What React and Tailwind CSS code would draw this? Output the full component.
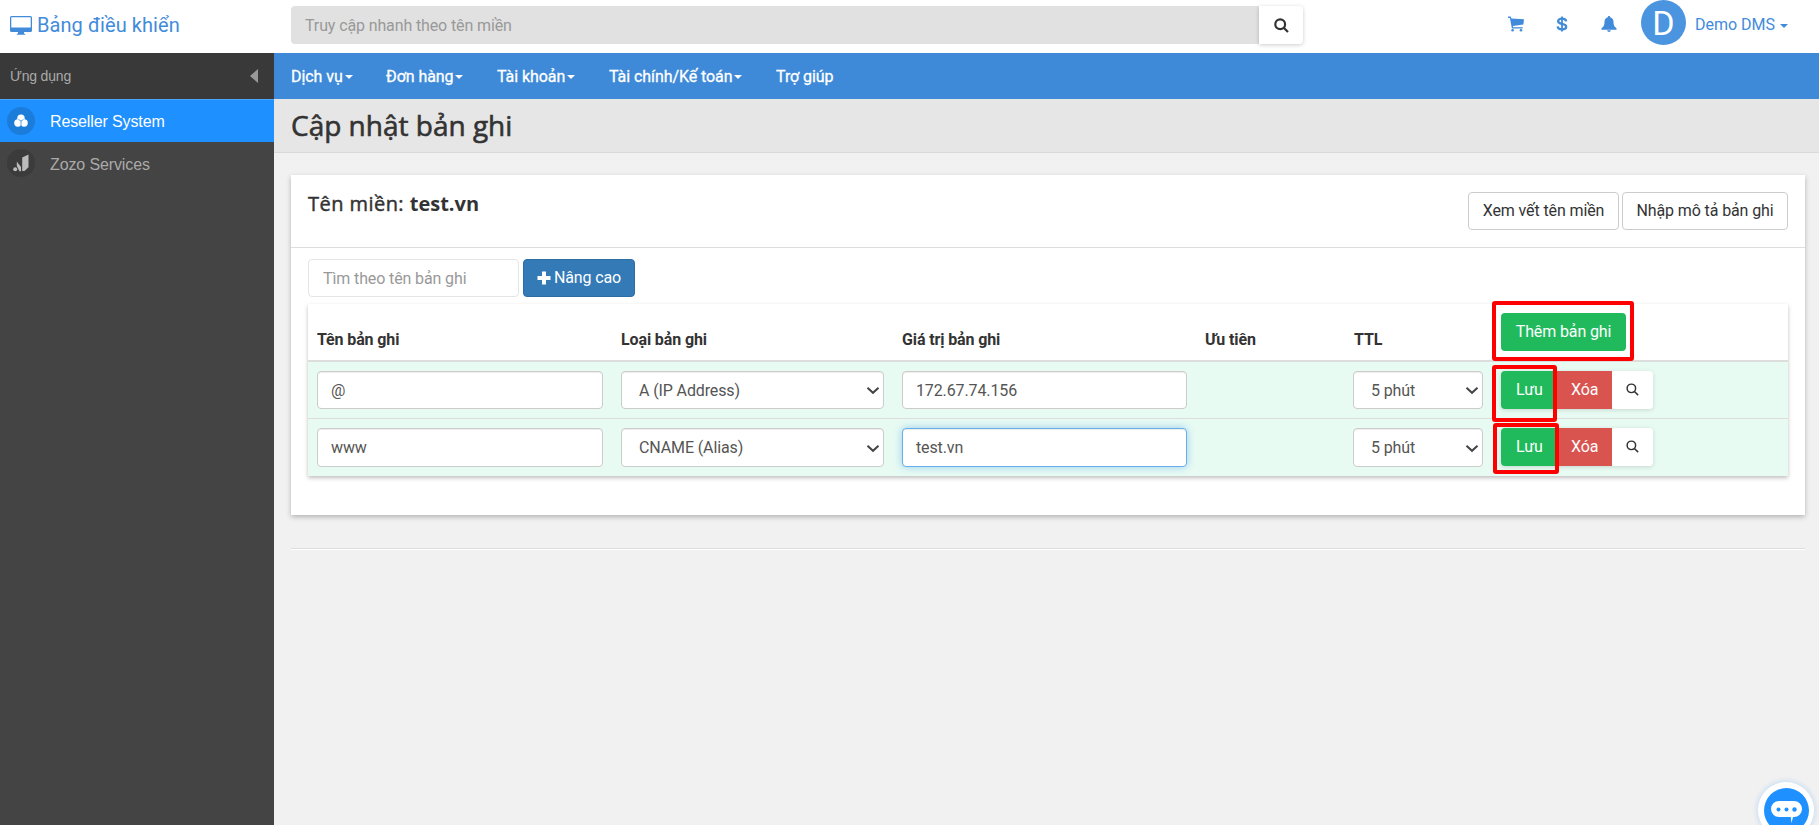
import React from 'react';

const menus = [
  { label: 'Dịch vụ', caret: true, width: 'w-[95px]' },
  { label: 'Đơn hàng', caret: true, width: 'w-[111px]' },
  { label: 'Tài khoản', caret: true, width: 'w-[112px]' },
  { label: 'Tài chính/Kế toán', caret: true, width: 'w-[167px]' },
  { label: 'Trợ giúp', caret: false, width: 'w-[90px]' },
];

const records = [
  { name: '@', type: 'A (IP Address)', value: '172.67.74.156', ttl: '5 phút', focused: false, mark: '-left-[9px] -top-[6px] w-[65px] h-[57px]' },
  { name: 'www', type: 'CNAME (Alias)', value: 'test.vn', ttl: '5 phút', focused: true, mark: '-left-[8px] -top-[5px] w-[66px] h-[51px]' },
];

const cols = 'grid grid-cols-[304px_281px_303px_149px_147px_1fr]';
const field = 'w-full rounded border px-[13px] text-[#555] bg-white';

const Caret = ({ className = 'ml-[2px]' }) => (
  <span className={`inline-block w-0 h-0 border-x-4 border-x-transparent border-t-4 border-t-current align-middle ${className}`} />
);

const DesktopIcon = () => (
  <svg width="22" height="19" viewBox="0 0 22 19" fill="currentColor">
    <path fillRule="evenodd" d="M1.5 0h19A1.5 1.5 0 0 1 22 1.5v13a1.5 1.5 0 0 1-1.5 1.5H14v1.4l1.2.6v.8H6.8V18l1.2-.6V16H1.5A1.5 1.5 0 0 1 0 14.5v-13A1.5 1.5 0 0 1 1.5 0zM1.300 1.300v10.200h19.400V1.300z" />
  </svg>
);

const CartIcon = () => (
  <svg className="mr-[31px]" width="16" height="16" viewBox="0 0 16 16" fill="currentColor">
    <path d="M0 .6h2.7l.7 1.9L16 3.200l-.6 5.400-10.600 1.500.3 1.100h9.600v1.300H3.900L1.900 1.900H0z" />
    <circle cx="4.6" cy="14.3" r="1.3" />
    <circle cx="13" cy="14.3" r="1.3" />
  </svg>
);

const DollarIcon = () => (
  <svg className="mr-[32px]" width="14" height="16" viewBox="0 0 14 16" fill="none" stroke="currentColor">
    <path strokeWidth="2.3" d="M11.2 5.4C11 3.6 9.5 2.7 7 2.7S3.1 3.6 3.1 5.2C3.1 7 4.7 7.4 7 7.9s4.200 1 4.200 2.900c0 1.700-1.700 2.600-4.200 2.600-2.700 0-4.200-1-4.300-3" />
    <path strokeWidth="1.8" d="M7 .4v15.2" />
  </svg>
);

const BellIcon = () => (
  <svg className="mr-[24px]" width="16" height="16" viewBox="0 0 16 16" fill="currentColor">
    <path d="M8 0c.8 0 1.200.5 1.200 1.200 2.300.6 3.300 2.300 3.300 4.800 0 3.200.7 4.800 3 6.200v1.500H.5v-1.500c2.300-1.400 3-3 3-6.200 0-2.500 1-4.200 3.300-4.800C6.800.5 7.200 0 8 0z" />
    <path d="M6.2 14.2h3.600a1.800 1.800 0 0 1-3.600 0z" />
  </svg>
);

const SearchIcon = ({ size, stroke }) => (
  <svg width={size} height={size} viewBox="0 0 15 15" fill="none" stroke="currentColor" strokeWidth={stroke}>
    <circle cx="6.2" cy="6.2" r="4.9" />
    <path d="M9.7 9.7L14 14" />
  </svg>
);

const PlusIcon = () => (
  <svg className="mr-[3px]" width="14" height="14" viewBox="0 0 14 14" fill="currentColor">
    <path d="M5 .5h4V5h4.5v4H9v4.5H5V9H.5V5H5z" />
  </svg>
);

const TextField = ({ value, focused, height }) => (
  <div
    className={`${field} ${height} leading-[37px] ${
      focused
        ? 'border-[#66afe9] shadow-[inset_0_1px_1px_rgba(0,0,0,0.075),0_0_8px_rgba(102,175,233,0.6)]'
        : 'border-[#ccc] shadow-[inset_0_1px_1px_rgba(0,0,0,0.075)]'
    }`}
  >
    {value}
  </div>
);

const SelectField = ({ value, height }) => (
  <div className={`${field} ${height} flex items-center justify-between border-[#ccc] pl-[17px] pr-[3px] shadow-[inset_0_1px_1px_rgba(0,0,0,0.075)]`}>
    <span className="leading-[37px]">{value}</span>
    <svg width="14" height="10" viewBox="0 0 14 10" fill="none" stroke="#444" strokeWidth="2">
      <path d="M1.5 2.8 L7 7.8 L12.5 2.8" />
    </svg>
  </div>
);

const Mark = ({ className }) => (
  <span className={`absolute rounded-[3px] border-4 border-[#fe0000] ${className}`} />
);

const Header = () => (
  <header className="flex h-[53px] bg-white text-[#428bda]">
    <div className="flex w-[274px] items-center pb-[3px] pl-[10px]">
      <DesktopIcon />
      <span className="ml-[5px] text-[20px] tracking-[0.08px]">Bảng điều khiển</span>
    </div>
    <div className="flex pl-[17px] pt-[6px]">
      <div className="h-[38px] w-[968px] rounded-l bg-[#e1e1e1] pl-[14px] leading-[39px] text-[#999]">
        Truy cập nhanh theo tên miền
      </div>
      <div className="flex h-[38px] w-[44px] items-center justify-center rounded-r bg-white text-[#333] shadow-[0_1px_4px_rgba(0,0,0,0.2)]">
        <SearchIcon size="15" stroke="2.2" />
      </div>
    </div>
    <div className="ml-auto flex h-[48px] items-center pr-[31px]">
      <CartIcon />
      <DollarIcon />
      <BellIcon />
      <div className="mb-[3px] flex h-[45px] w-[45px] items-center justify-center rounded-full bg-[#4a94e0] text-[34px] text-white">
        D
      </div>
      <span className="ml-[9px] mt-[2px] tracking-normal">
        Demo DMS <Caret className="ml-[1px]" />
      </span>
    </div>
  </header>
);

const Sidebar = () => (
  <aside className="flex w-[274px] flex-col bg-[#444] font-['Liberation_Sans',sans-serif] text-[#aaa]">
    <div className="flex h-[46px] items-center justify-between bg-[#393939] pl-[10px] pr-[16px]">
      <span className="text-[14px] tracking-[-0.2px]">Ứng dụng</span>
      <svg width="8" height="14" viewBox="0 0 8 14" fill="#999">
        <path d="M8 0v14L0 7z" />
      </svg>
    </div>
    <div className="flex h-[43px] items-center border-t border-[#4ba6fb] bg-[#1e90ff] pl-[7px] text-white">
      <span className="flex h-7 w-7 items-center justify-center rounded-full bg-[#1c7cd9]">
        <svg width="14" height="14" viewBox="0 0 14 14" fill="#fff">
          <circle cx="7" cy="4.2" r="3.7" />
          <circle cx="3.9" cy="9" r="3.7" />
          <circle cx="10.1" cy="9" r="3.7" />
          <path d="M7 7v5M7 7L4.5 5.5M7 7l2.5-1.5" stroke="#1c7cd9" strokeWidth="0.7" />
        </svg>
      </span>
      <span className="ml-[15px] pt-[1px]">Reseller System</span>
    </div>
    <div className="flex h-[43px] items-center pl-[7px] pb-px">
      <span className="flex h-7 w-7 items-center justify-center rounded-full bg-[#3b3b3b]">
        <svg width="16" height="18" viewBox="0 0 16 18" fill="#bbb">
          <circle cx="2.2" cy="15.2" r="2" />
          <path d="M3.8 7.5L8 13v4.300H6.500L3.800 12z" />
          <path d="M9.2 3.5L15.500.5v12.700l-4 3.800H9.200z" />
        </svg>
      </span>
      <span className="ml-[15px] pt-[3px]">Zozo Services</span>
    </div>
  </aside>
);

const RecordRow = ({ record, first }) => {
  const height = first ? 'h-[38px]' : 'h-[39px]';

  return (
    <div className={`${cols} items-start bg-[#e8fbf3] pt-[9px] ${first ? 'h-[56px]' : 'h-[58px] border-t border-[#ddd]'}`}>
      <div className="px-[9px]"><TextField value={record.name} height={height} /></div>
      <div className="px-[9px]"><SelectField value={record.type} height={height} /></div>
      <div className="px-[9px]"><TextField value={record.value} focused={record.focused} height={height} /></div>
      <div />
      <div className="pl-[8px] pr-[9px]"><SelectField value={record.ttl} height={height} /></div>
      <div className="flex pl-[9px]">
        <div className="relative flex h-[38px] rounded shadow-[0_1px_4px_rgba(0,0,0,0.15)]">
          <span className="w-[56px] rounded-l bg-[#20ba5c] pl-[15px] leading-[37px] text-white">Lưu</span>
          <span className="w-[55px] bg-[#d9534f] pl-[14px] leading-[37px] text-white">Xóa</span>
          <span className="flex w-[41px] items-center justify-center rounded bg-white pb-[2px] text-[#333]">
            <SearchIcon size="13" stroke="1.7" />
          </span>
          <Mark className={record.mark} />
        </div>
      </div>
    </div>
  );
};

const RecordTable = () => (
  <div className="mt-[7px] shadow-[0_2px_4px_rgba(0,0,0,0.25)]">
    <div className={`${cols} h-[58px] items-end border-b-2 border-[#ddd] font-bold text-[#333]`}>
      <div className="pb-[9px] pl-[9px]">Tên bản ghi</div>
      <div className="pb-[9px] pl-[9px]">Loại bản ghi</div>
      <div className="pb-[9px] pl-[9px]">Giá trị bản ghi</div>
      <div className="pb-[9px] pl-[9px]">Ưu tiên</div>
      <div className="pb-[9px] pl-[9px]">TTL</div>
      <div className="flex pb-[9px] pl-[9px] font-normal">
        <div className="relative">
          <div className="h-[38px] w-[125px] rounded bg-[#20ba5c] text-center leading-[37px] text-white">
            Thêm bản ghi
          </div>
          <Mark className="-left-[9px] -top-[12px] h-[60px] w-[142px]" />
        </div>
      </div>
    </div>
    {records.map((record, i) => (
      <RecordRow key={record.name} record={record} first={i === 0} />
    ))}
  </div>
);

const App = () => {
  return (
    <div className="relative flex h-[825px] w-[1819px] flex-col overflow-hidden bg-[#f1f1f1] font-['Roboto',sans-serif] text-[16px] leading-[22px] tracking-[-0.12px]">
      <Header />
      <div className="flex flex-1">
        <Sidebar />
        <div className="flex-1">
          {/* Main menu */}
          <nav className="flex h-[46px] items-center bg-[#3e8ad8] pl-[17px] pt-px text-white [-webkit-text-stroke:0.3px_white] tracking-[-0.07px]">
            {menus.map((menu) => (
              <span key={menu.label} className={`${menu.width} whitespace-nowrap`}>
                {menu.label}
                {menu.caret && <Caret />}
              </span>
            ))}
          </nav>

          <div className="h-[54px] border-b border-[#d9d9d9] bg-[#e6e6e6] pl-[17px]">
            <h1 className="font-['Open_Sans',sans-serif] text-[28px] leading-[53px] tracking-normal text-[#333] [-webkit-text-stroke:0.6px_#333]">
              Cập nhật bản ghi
            </h1>
          </div>

          {/* Record panel */}
          <main className="ml-[17px] mr-[14px] mt-[22px] h-[340px] bg-white shadow-[0_2px_5px_rgba(0,0,0,0.26)]">
            <div className="flex h-[73px] items-start justify-between border-b border-[#ddd] px-[17px] pt-[17px]">
              <h2 className="font-['Open_Sans',sans-serif] text-[20px] leading-[24px] tracking-normal text-[#333]">
                <span className="tracking-[0.45px] [-webkit-text-stroke:0.45px_#333]">Tên miền: </span>
                <b>test.vn</b>
              </h2>
              <div className="flex gap-[3px] text-center leading-[36px] text-[#333]">
                <div className="h-[38px] w-[151px] rounded border border-[#ccc]">Xem vết tên miền</div>
                <div className="h-[38px] w-[166px] rounded border border-[#ccc]">Nhập mô tả bản ghi</div>
              </div>
            </div>
            <div className="px-[17px] pt-[11px]">
              <div className="flex gap-1">
                <div className="h-[38px] w-[211px] rounded border border-[#e5e5e5] pl-[14px] leading-[38px] text-[#999]">
                  Tìm theo tên bản ghi
                </div>
                <div className="flex h-[38px] w-[112px] items-center justify-center rounded border border-[#2e6da4] bg-[#337ab7] text-white">
                  <PlusIcon />
                  Nâng cao
                </div>
              </div>
              <RecordTable />
            </div>
          </main>

          <div className="ml-[17px] mr-[14px] mt-[33px] border-b border-t border-b-white border-t-[#ddd]" />
        </div>
      </div>

      {/* Chat bubble */}
      <div className="absolute left-[1758px] top-[782px] flex h-[56px] w-[56px] items-center justify-center rounded-full bg-white shadow-[0_0_4px_2px_rgba(30,144,255,0.15)]">
        <div className="flex h-[45px] w-[45px] items-center justify-center rounded-full bg-[#1e90ff]">
          <svg width="31" height="26" viewBox="0 0 31 26">
            <path d="M8 4h15a8 8 0 0 1 0 16h-1l-1.500 6-.7-6H8A8 8 0 0 1 8 4z" fill="#fff" />
            <circle cx="7.5" cy="12.5" r="2" fill="#1e90ff" />
            <circle cx="15.5" cy="12.5" r="2" fill="#1e90ff" />
            <circle cx="23.5" cy="12.5" r="2.2" fill="#1e90ff" />
          </svg>
        </div>
      </div>
    </div>
  );
};

export default App;
